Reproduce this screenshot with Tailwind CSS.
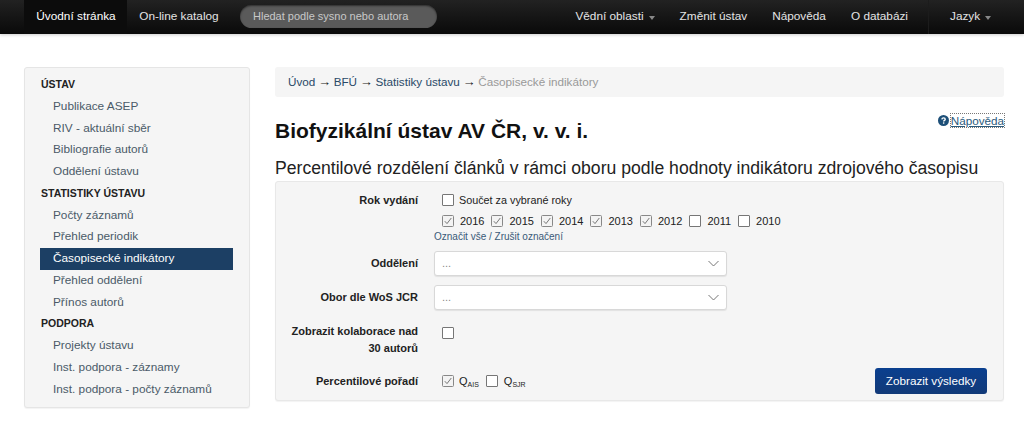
<!DOCTYPE html>
<html lang="cs">
<head>
<meta charset="utf-8">
<script src="https://cdn.jsdelivr.net/npm/@tailwindcss/browser@4"></script>
<title>Časopisecké indikátory</title>
</head>
<body class="bg-white font-['Liberation_Sans',Arial,sans-serif] text-[12px] text-[#333] h-[428px] overflow-hidden">
<nav class="h-[34px] bg-gradient-to-b from-[#222] to-[#0a0a0a] flex items-stretch pl-6 pr-5 text-[11.8px] text-[#e4e4e4] shadow-[0_1px_3px_rgba(0,0,0,0.2)]">
  <a class="w-[103px] bg-[#0c0c0c] flex items-center justify-center text-white pl-[1px]">Úvodní stránka</a>
  <a class="w-[103px] flex items-center justify-center pl-[1px]">On-line katalog</a>
  <div class="ml-[10px] self-center w-[197px] h-[23px] mt-[-1px] rounded-full bg-[#5a5a5a] shadow-[inset_0_1px_2px_rgba(0,0,0,0.5)] flex items-center pl-[13px] text-[11px] text-[#c8c8c8]">Hledat podle sysno nebo autora</div>
  <div class="ml-auto flex items-stretch">
    <a class="flex items-center gap-[5px] pr-[25px]">Vědní oblasti <span class="border-x-[3.5px] border-x-transparent border-t-[4px] border-t-[#888] mt-[1px]"></span></a>
    <a class="flex items-center pr-[25px]">Změnit ústav</a>
    <a class="flex items-center pr-[25px]">Nápověda</a>
    <a class="flex items-center pr-[20px]">O databázi</a>
    <a class="flex items-center gap-[5px] w-[76px] pl-[21px] border-l border-[#1c1c1c]">Jazyk <span class="border-x-[3.5px] border-x-transparent border-t-[4px] border-t-[#888] mt-[1px]"></span></a>
  </div>
</nav>
<div class="flex gap-[25px] pl-6 pr-5 pt-[33px]">
  <aside class="w-[226px] h-[341px] shrink-0 bg-[#f5f5f5] border border-[#e5e5e5] rounded-[3px] shadow-[0_1px_1px_rgba(0,0,0,0.05)] px-[15px] pt-[6px] text-[11.8px] leading-[21.75px] text-[#4a5a68]">
    <div class="font-bold text-[10.5px] text-[#222] uppercase pl-[1px]">Ústav</div>
    <a class="block pl-[13px]">Publikace ASEP</a>
    <a class="block pl-[13px]">RIV - aktuální sběr</a>
    <a class="block pl-[13px]">Bibliografie autorů</a>
    <a class="block pl-[13px]">Oddělení ústavu</a>
    <div class="font-bold text-[10.5px] text-[#222] uppercase pl-[1px]">Statistiky ústavu</div>
    <a class="block pl-[13px]">Počty záznamů</a>
    <a class="block pl-[13px]">Přehled periodik</a>
    <a class="block pl-[13px] w-[193px] bg-[#1c3f64] text-white">Časopisecké indikátory</a>
    <a class="block pl-[13px]">Přehled oddělení</a>
    <a class="block pl-[13px]">Přínos autorů</a>
    <div class="font-bold text-[10.5px] text-[#222] uppercase pl-[1px]">Podpora</div>
    <a class="block pl-[13px]">Projekty ústavu</a>
    <a class="block pl-[13px]">Inst. podpora - záznamy</a>
    <a class="block pl-[13px]">Inst. podpora - počty záznamů</a>
  </aside>
  <main class="w-[729px] shrink-0">
    <div class="h-[30px] bg-[#f5f5f5] rounded-[3px] px-[13px] flex items-center gap-[2.7px] text-[11.7px] text-[#2a4a68]">
      <span>Úvod</span><span class="text-[13px] text-[#222]">→</span><span>BFÚ</span><span class="text-[13px] text-[#222]">→</span><span>Statistiky ústavu</span><span class="text-[13px] text-[#222]">→</span><span class="text-[#999]">Časopisecké indikátory</span>
    </div>
    <div class="flex justify-between items-start h-[60px]">
      <h1 class="mt-[19px] text-[21px] leading-[30px] font-bold text-[#111]">Biofyzikální ústav AV ČR, v. v. i.</h1>
      <a class="mt-[17px] flex items-center gap-[2px] text-[11.7px] leading-[13px] text-[#2a5a7c]">
        <svg class="w-[11px] h-[11px]" viewBox="0 0 12 12"><circle cx="6" cy="6" r="6" fill="#1d4f78"/><path d="M4.2 4.7c.1-1 .9-1.6 1.9-1.6s1.8.6 1.8 1.5c0 1.3-1.7 1.3-1.7 2.5" fill="none" stroke="#fff" stroke-width="1.5"/><rect x="5.4" y="8" width="1.5" height="1.5" fill="#fff"/></svg>
        <span class="underline outline-1 outline-dotted outline-[#777]">Nápověda</span>
      </a>
    </div>
    <h2 class="text-[17.6px] leading-[24px] mt-[-1px] mb-[1px] text-[#222] whitespace-nowrap">Percentilové rozdělení článků v rámci oboru podle hodnoty indikátoru zdrojového časopisu</h2>
    <form class="h-[220px] bg-[#f5f5f5] border border-[#e8e8e8] rounded-[3px] shadow-[0_1px_1px_rgba(0,0,0,0.05)] relative text-[11px] text-[#222]">
      <div class="flex pt-[10px]">
        <div class="w-[142px] text-right font-bold leading-[16px]">Rok vydání</div>
        <div class="ml-[16px] pl-[8px]">
          <label class="flex items-center gap-[5px] h-[16px] text-[10.8px]"><span class="w-[12px] h-[12px] border border-[#767676] rounded-[1px] bg-white"></span>Součet za vybrané roky</label>
          <div class="flex items-center mt-[5px] h-[16px] text-[11px]">
            <span class="flex items-center gap-[6px] mr-[7px]"><svg class="w-[12px] h-[12px]" viewBox="0 0 12 12"><rect x=".5" y=".5" width="11" height="11" rx="1" fill="#f3f3f3" stroke="#888"/><path d="M2.8 6.2 5 8.6 9.3 3" fill="none" stroke="#777"/></svg>2016</span>
            <span class="flex items-center gap-[6px] mr-[7px]"><svg class="w-[12px] h-[12px]" viewBox="0 0 12 12"><rect x=".5" y=".5" width="11" height="11" rx="1" fill="#f3f3f3" stroke="#888"/><path d="M2.8 6.2 5 8.6 9.3 3" fill="none" stroke="#777"/></svg>2015</span>
            <span class="flex items-center gap-[6px] mr-[7px]"><svg class="w-[12px] h-[12px]" viewBox="0 0 12 12"><rect x=".5" y=".5" width="11" height="11" rx="1" fill="#f3f3f3" stroke="#888"/><path d="M2.8 6.2 5 8.6 9.3 3" fill="none" stroke="#777"/></svg>2014</span>
            <span class="flex items-center gap-[6px] mr-[7px]"><svg class="w-[12px] h-[12px]" viewBox="0 0 12 12"><rect x=".5" y=".5" width="11" height="11" rx="1" fill="#f3f3f3" stroke="#888"/><path d="M2.8 6.2 5 8.6 9.3 3" fill="none" stroke="#777"/></svg>2013</span>
            <span class="flex items-center gap-[6px] mr-[7px]"><svg class="w-[12px] h-[12px]" viewBox="0 0 12 12"><rect x=".5" y=".5" width="11" height="11" rx="1" fill="#f3f3f3" stroke="#888"/><path d="M2.8 6.2 5 8.6 9.3 3" fill="none" stroke="#777"/></svg>2012</span>
            <span class="flex items-center gap-[6px] mr-[7px]"><span class="w-[12px] h-[12px] border border-[#767676] rounded-[1px] bg-white"></span>2011</span>
            <span class="flex items-center gap-[6px]"><span class="w-[12px] h-[12px] border border-[#767676] rounded-[1px] bg-white"></span>2010</span>
          </div>
        </div>
      </div>
      <div class="ml-[158px] mt-[1px] text-[10px] leading-[13px] text-[#3a5a78]">Označit vše / Zrušit označení</div>
      <div class="flex items-center mt-[8px]">
        <div class="w-[142px] text-right font-bold">Oddělení</div>
        <div class="ml-[16px] w-[293px] h-[25px] bg-white border border-[#d8d8d8] rounded-[3px] shadow-[0_1px_1px_rgba(0,0,0,0.08)] flex items-center justify-between pl-[7px] pr-[7px] text-[#888]">...<svg class="w-[11px] h-[7px]" viewBox="0 0 11 7"><path d="M.5 1 5.5 6l5-5" fill="none" stroke="#777"/></svg></div>
      </div>
      <div class="flex items-center mt-[9px]">
        <div class="w-[142px] text-right font-bold">Obor dle WoS JCR</div>
        <div class="ml-[16px] w-[293px] h-[25px] bg-white border border-[#d8d8d8] rounded-[3px] shadow-[0_1px_1px_rgba(0,0,0,0.08)] flex items-center justify-between pl-[7px] pr-[7px] text-[#888]">...<svg class="w-[11px] h-[7px]" viewBox="0 0 11 7"><path d="M.5 1 5.5 6l5-5" fill="none" stroke="#777"/></svg></div>
      </div>
      <div class="flex items-start mt-[13px]">
        <div class="w-[142px] text-right font-bold leading-[17px]">Zobrazit kolaborace nad<br>30 autorů</div>
        <span class="ml-[24px] mt-[4px] w-[12px] h-[12px] border border-[#767676] rounded-[1px] bg-white"></span>
      </div>
      <div class="flex items-center mt-[16px] h-[16px]">
        <div class="w-[142px] text-right font-bold">Percentilové pořadí</div>
        <div class="ml-[24px] flex items-center">
          <svg class="w-[12px] h-[12px] mr-[5px]" viewBox="0 0 12 12"><rect x=".5" y=".5" width="11" height="11" rx="1" fill="#f3f3f3" stroke="#888"/><path d="M2.8 6.2 5 8.6 9.3 3" fill="none" stroke="#777"/></svg>
          <span class="text-[11px] mr-[7px]">Q<sub class="text-[7px]">AIS</sub></span>
          <span class="w-[12px] h-[12px] border border-[#767676] rounded-[1px] bg-white mr-[6px]"></span>
          <span class="text-[11px]">Q<sub class="text-[7px]">SJR</sub></span>
        </div>
      </div>
      <button type="button" class="absolute right-[16px] bottom-[6px] w-[112px] h-[26px] rounded-[3px] bg-gradient-to-b from-[#0a3f8f] to-[#123a78] text-white text-[11.7px] leading-none">Zobrazit výsledky</button>
    </form>
  </main>
</div>
</body>
</html>
